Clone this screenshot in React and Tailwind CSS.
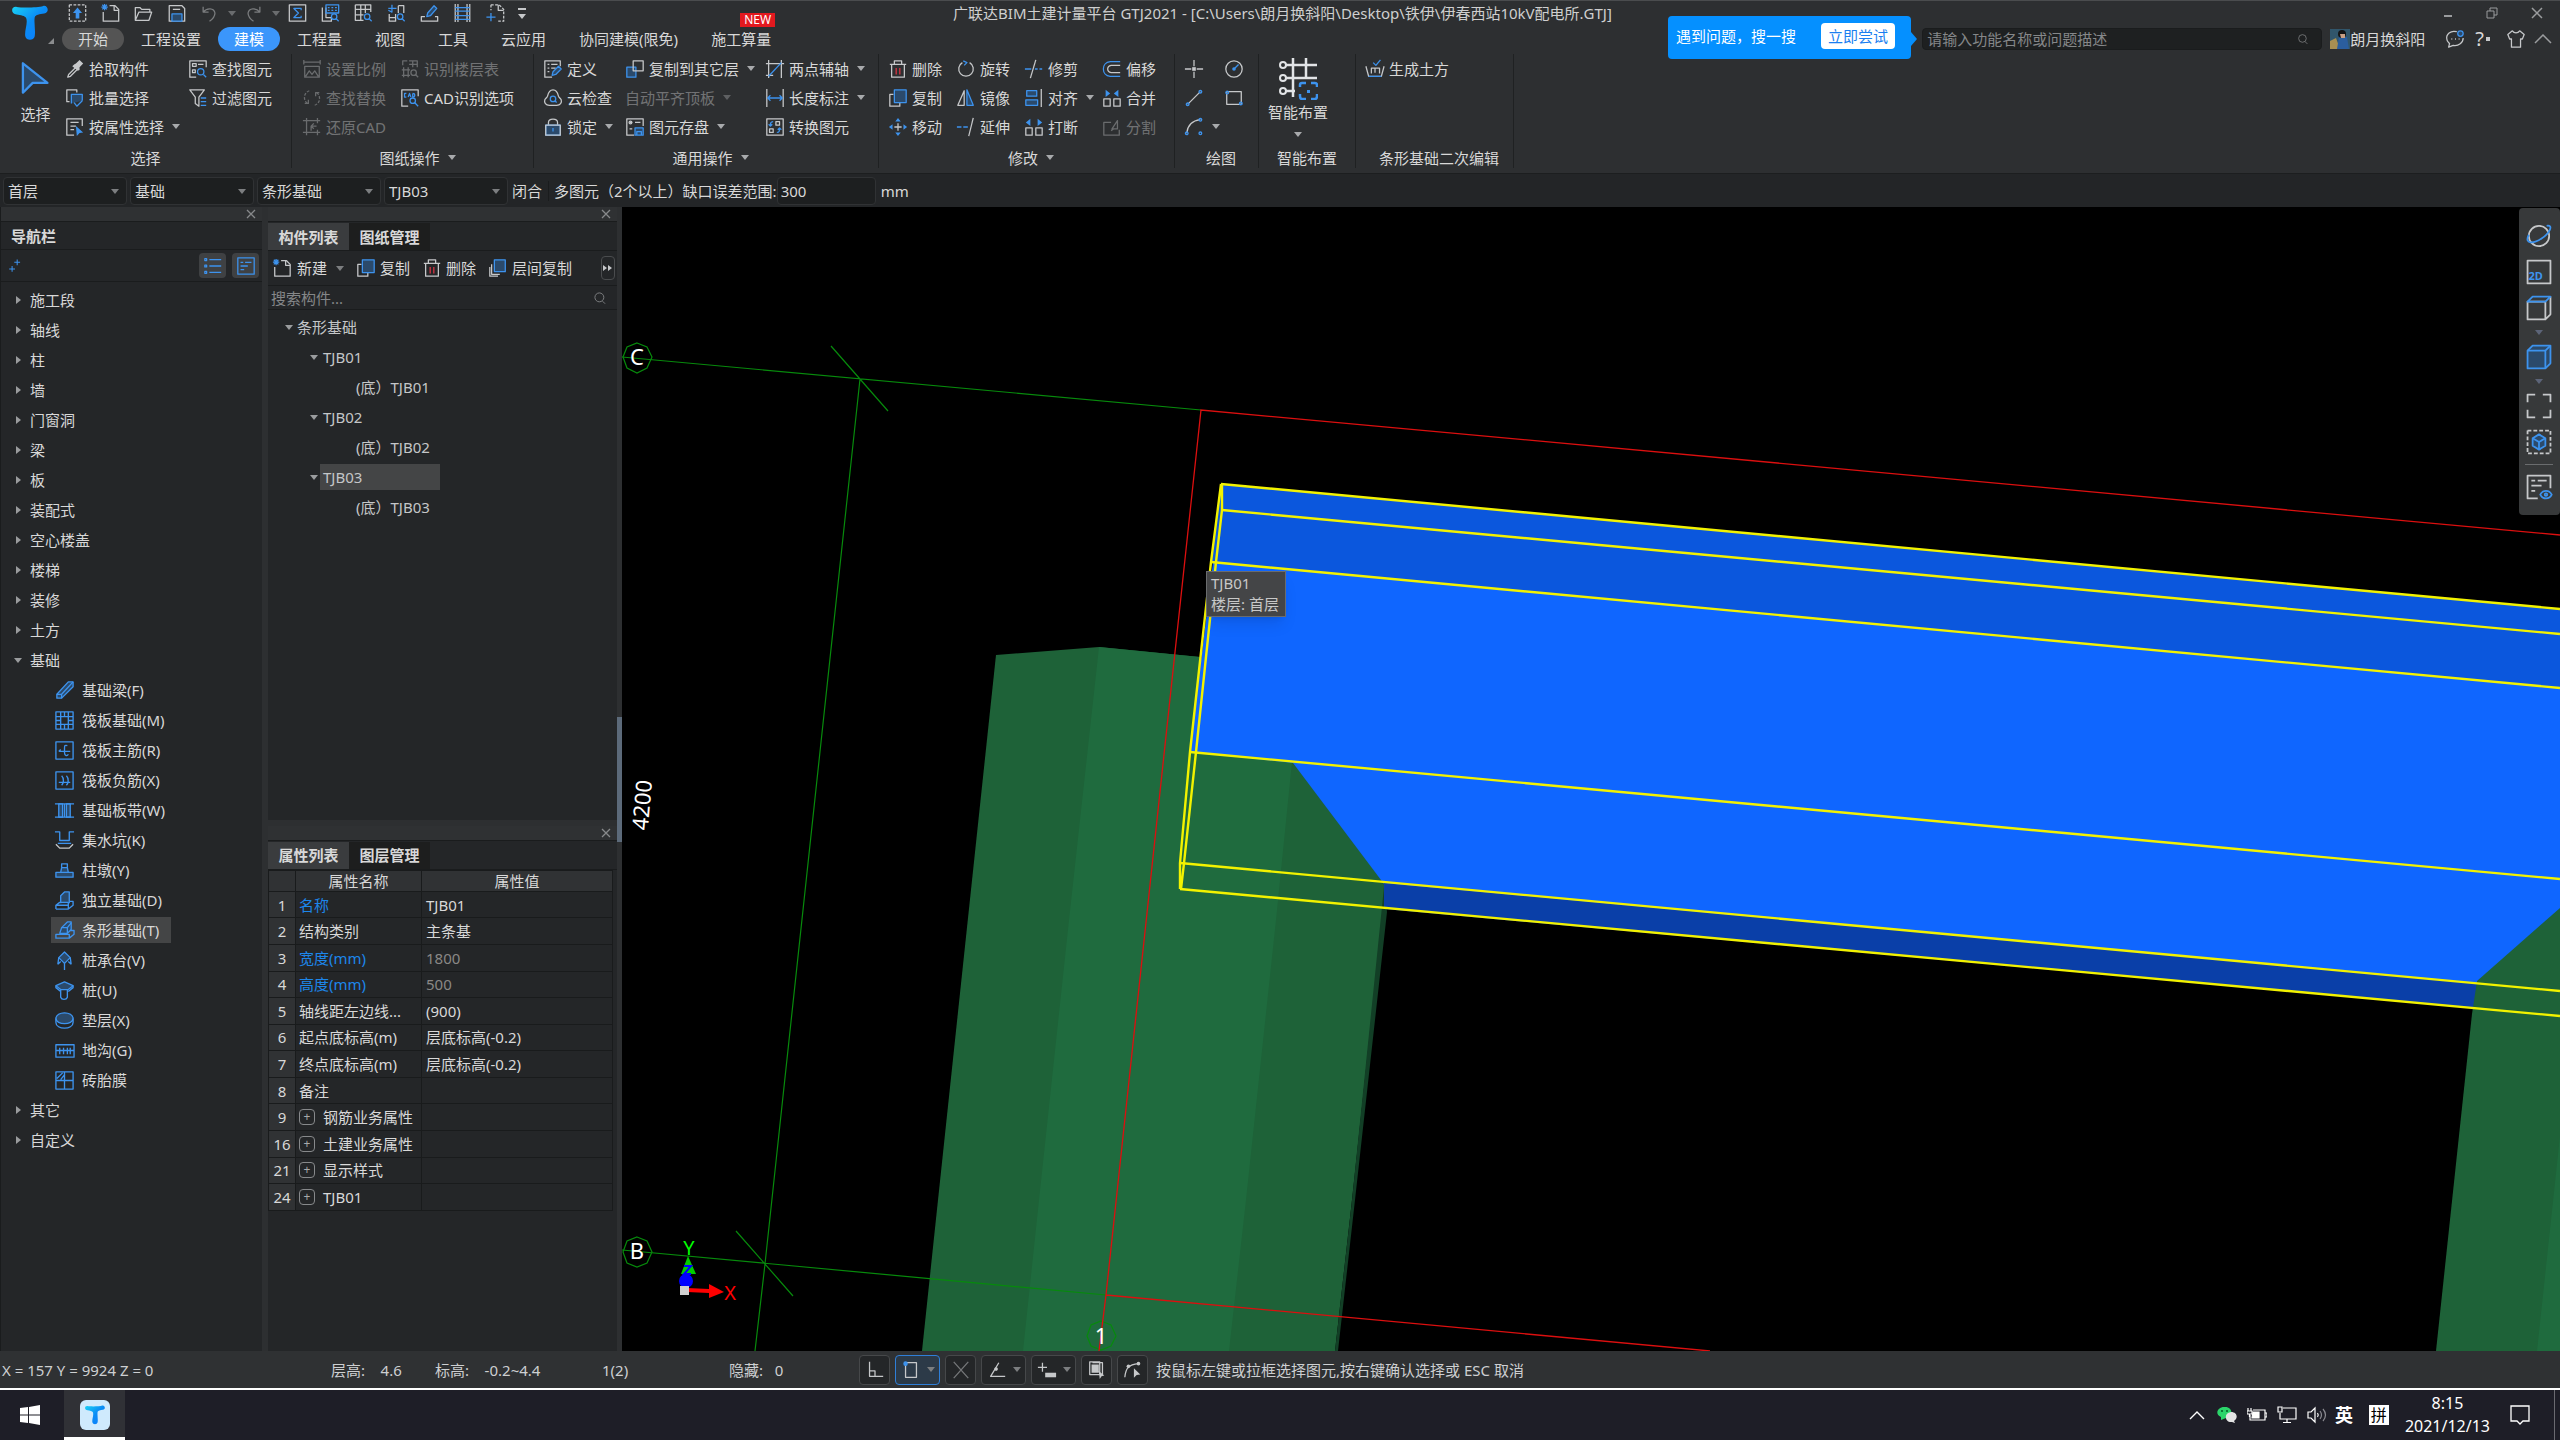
import React from 'react';
import clsx from 'clsx';

// circle as a path, so that every icon is a plain list of strokes
const c = (x, y, r) => `M${x - r} ${y}a${r} ${r} 0 1 0 ${2 * r} 0a${r} ${r} 0 1 0 ${-2 * r} 0`;

const strokes = {
  w: { stroke: '#c6c8ca', fill: 'none' },
  b: { stroke: '#3d93ee', fill: 'none' },
  bf: { stroke: '#3d93ee', fill: '#2b4a6b' },
  bs: { stroke: 'none', fill: '#3d93ee' },
  ws: { stroke: 'none', fill: '#c6c8ca' },
  r: { stroke: '#d93644', fill: 'none' },
  wd: { stroke: '#c6c8ca', fill: 'none', strokeDasharray: '3 1.6' },
};

const icons = {
  upload: [['wd', 'M1 1h18v18H1z'], ['bs', 'M10 4l5 6h-3v6H8v-6H5z']],
  newDoc: [['w', 'M9 2h6l4 4v13H2V9'], ['w', 'M14 2v5h5'], ['b', 'M1 1l5 5M6 1L1 6M3.5 0v7M0 3.5h7']],
  open: [['w', 'M1 18V4h5l2 2h9v3M1 18L5 9h14l-3 9z']],
  save: [['w', 'M2 2h14l3 3v14H2z'], ['bf', 'M5 11h11v8H5z'], ['w', 'M6 6h8']],
  undo: [['w', 'M3 3v6h6M3 9c4-5 12-5 13 1 0 4-3 7-6 9']],
  redo: [['w', 'M17 3v6h-6M17 9C13 4 5 4 4 10c0 4 3 7 6 9']],
  sum: [['w', 'M1 1h18v18H1z'], ['b', 'M14 7V5H6l5 5-5 5h8v-2']],
  calcFind: [['w', 'M1 4v15h10v-4H5V4'], ['b', 'M5 1h14v9H5zM7 4h2M11 4h2M15 4h2M7 7h2M11 7h2M15 7h2'], ['b', c(14, 14, 3)], ['b', 'M16 16l3 3']],
  gridFind: [['w', 'M1 1h17v8M1 1v17h9M1 6h17M1 12h9M7 1v17M12 1v9'], ['b', c(14, 14, 3)], ['b', 'M16 16l3 3']],
  barFind: [['b', 'M1 5h9M5 1v8l-4-2'], ['w', 'M12 2h6v8M12 2v8M2 11v8h7v-8M2 15h7'], ['b', c(14, 14, 3)], ['b', 'M16 16l3 3']],
  penTray: [['w', 'M5 14H1v5h18v-5h-3'], ['bf', 'M7 14l1-4 7-8 3 3-7 8z']],
  frame: [['w', 'M2 0v20M5 0v20M15 0v20M18 0v20'], ['b', 'M2 4h16M2 8h16M2 13h16M2 17h16']],
  select4: [['wd', 'M5 1h9l5 5v13h-6M5 1v6'], ['w', 'M13 1v6h6'], ['b', 'M5 10v9M0 14.5h10']],
  arrow: [['bf', 'M2 1v18l6-6h9z']],
  dropper: [['w', 'M11 8L3 16l-1 3 3-1 8-8'], ['ws', 'M9 5l2-1 4-4 4 4-4 4 0 3-2 1-6-5z']],
  batch: [['w', 'M4 14H1V1h11v3'], ['bf', 'M6 16V6h12v7'], ['b', 'M9 15l3 4 6-6']],
  byProp: [['w', 'M9 19H1V1h17v8M5 5h9M5 9h6M5 13h4'], ['bs', 'M11 9l8 7-4 .5-3 3.5z']],
  findEl: [['w', 'M8 19H1V1h18v7M4 4h4v3H4zM4 11h3v3H4zM10 5h6'], ['b', c(13, 13, 3.5)], ['b', 'M16 16l3 3']],
  filter: [['w', 'M1 1h16l-6 8v10l-4-3V9z'], ['b', 'M13 10h6M13 14h6M13 18h6']],
  scale: [['w', 'M1 0v5M19 0v5M1 2.5h18M2 7h16v12H2zM3 18l4-6 3 4 3-4 4 6']],
  floorTable: [['w', 'M2 6V1h5M9 1h9v7M13 1v7M9 5h9M1 11h9M1 17h9M3 8v11M8 8v11'], ['w', c(14, 14, 3)], ['w', 'M16 16l3 3']],
  replace: [['wd', 'M7 2a8 8 0 0 0-2 14M13 18a8 8 0 0 0 2-14'], ['w', 'M2 16h4v-4M18 4h-4v4']],
  cad: [['w', 'M8 19H1V1h18v7'], ['b', 'M6 5H4v4h2M8 9l1.500-4L11 9M13 5v4c3 0 3-4 0-4'], ['b', c(13, 13, 3)], ['b', 'M15 15l4 4']],
  restore: [['w', 'M0 3h19M0 16h19M4 0v19M16 0v6M16 13v6M15 9H9v5M12 6L9 9l3 3']],
  define: [['w', 'M9 19H1V1h17v6M4 5h2M8 5h7M4 9h2M8 9h5M4 13h2'], ['bf', 'M9 17l1-4 6-6 3 3-6 6z']],
  cloud: [['w', 'M6 18C2 18 0 15 1 12c1-2 2-2 3-4C5 3 8 1 10 1s5 2 6 7c1 2 2 2 3 4 1 3-1 6-5 6z'], ['b', c(10, 11, 3)], ['b', 'M12 13l2 2']],
  lock: [['w', 'M5 8V5c0-5 10-5 10 0v3'], ['bf', 'M2 8h16v11H2z'], ['w', 'M2 8h16v11H2z'], ['b', 'M10 11v4']],
  copyFloor: [['bf', 'M1 8h10v11H1z'], ['w', 'M8 1h11v11H8z']],
  store: [['w', 'M9 19H1V1h18v8M4 5h3M4 12h3M10 5h6'], ['w', c(5, 5, 1.5)], ['bf', 'M10 11h9v8h-9zM12 19v-4h5v4']],
  axis: [['w', 'M3 0v20M17 0v20M0 4h20M0 17h8'], ['b', 'M3 18L17 3']],
  length: [['w', 'M1 0v20M19 0v20'], ['b', 'M2 10h16M5 7l-3 3 3 3M15 7l3 3-3 3']],
  convert: [['w', 'M1 1h18v18H1zM11 4h4v4h-4zM4 12h4v4H4z'], ['b', 'M8 4c-3 0-3 2-3 5M3 7l2 2 2-2M12 16c3 0 3-2 3-5M13 13l2-2 2 2']],
  trash: [['w', 'M1 5h18M6 5V1h8v4M3 5v14h14V5'], ['r', 'M8 9v7M12 9v7']],
  rotate: [['w', 'M6 3a8 8 0 1 0 8 0'], ['b', 'M7 1l4 2-3 3']],
  trim: [['w', 'M12 0L6 20'], ['b', 'M0 10h7M11 10h3M16 10h3']],
  offset: [['b', 'M19 2H8C-2 3-2 17 8 18h11'], ['w', 'M19 6H9c-5 1-5 7 0 8h10']],
  copy: [['w', 'M5 6H1v13h11v-4'], ['bf', 'M6 1h13v14H6z']],
  mirror: [['w', 'M8 2v16H1z'], ['bf', 'M11 1v17h7z']],
  align: [['bf', 'M2 2h11v6H2zM1 12h13v6H1z'], ['w', 'M18 0v20']],
  merge: [['w', 'M1 11h7v8H1zM12 11h7v8h-7z'], ['bs', 'M3 1l5 4-5 4zM17 1l-5 4 5 4z']],
  move: [['w', 'M10 6v8M6 10h8'], ['bs', 'M10 0l3 4H7zM10 20l3-4H7zM0 10l4-3v6zM20 10l-4-3v6z']],
  extend: [['b', 'M0 10h5M7 10h5'], ['w', 'M18 0l-5 20']],
  breakUp: [['w', 'M1 11h7v8H1zM12 11h7v8h-7z'], ['bs', 'M6 1L1 5l5 4zM14 1l5 4-5 4z']],
  split: [['w', 'M9 5H1v14h17v-6M10 12l6-9v9zM9 14l3-2']],
  point: [['w', 'M0 10h7M13 10h7M10 0v7M10 13v7'], ['ws', 'M8 8h4v4H8z']],
  circle: [['w', c(10, 10, 9)], ['b', 'M10 10l5-5'], ['bs', c(10, 10, 2)]],
  line: [['w', 'M3 17L17 3'], ['b', c(3, 17, 1.5)], ['b', c(17, 3, 1.5)]],
  rect: [['w', 'M2 3h16v14H2z'], ['b', c(2.5, 4, 1.5)], ['b', c(17.5, 16, 1.5)]],
  arc: [['w', 'M2 17C3 8 8 3 17 2'], ['b', c(2, 17, 1.5)], ['b', c(17, 2, 1.5)], ['b', c(17, 17, 1.5)]],
  earth: [['w', 'M0 7l3 11h14l3-11M6 15V9h9v6M10 9v5'], ['b', 'M8 3l3 3 5-6M3 18h14']],
  layerCopy: [['w', 'M3 6v11h9M1 9v10h9'], ['bf', 'M6 1h12v13H6z']],
  sparkle: [['b', 'M13 1v8M9 5h8M6 10v8M2 14h8']],
  list: [['b', 'M6 3h13M6 10h13M6 17h13M1 2h2v2H1zM1 9h2v2H1zM1 16h2v2H1z']],
  note: [['b', 'M1 1h18v18H1zM4 6h3M9 6h7M4 10h8M4 14h4']],
  search: [['w', c(9, 9, 7)], ['w', 'M14 15l4 4']],
  // foundation types
  beam: [['bf', 'M2 14L14 1h5v5L7 18H2z'], ['b', 'M2 14h5v4M7 14L19 1']],
  raft: [['b', 'M1 1h18v18H1zM1 6h18M1 14h18M6 1v18M14 1v18M10 1v5M10 14v5M1 10h5M14 10h5']],
  raftMain: [['b', 'M1 1h18v18H1zM4 11h12M13 5c-3-1-3 0-3 3v4c0 4 3 4 4 2M4 11l2-2']],
  raftNeg: [['b', 'M1 1h18v18H1zM4 12h12M7 5c3 3 2 8 0 10M12 5c3 3 2 8 0 10']],
  strip: [['bf', 'M4 3h4v14H4zM12 3h4v14h-4z'], ['b', 'M0 3h20M0 17h20M10 3v14']],
  pit: [['b', 'M0 1h5v9h10V1h5'], ['w', 'M1 14l4 4h10l4-4'], ['b', 'M3 13h14']],
  pier: [['bf', 'M1 12h18v5H1zM6 12l1-5h6l1 5z'], ['b', 'M7 7V3h6v4']],
  isolated: [['bf', 'M6 13V5l4-4h5v12'], ['b', 'M1 19v-4l4-3h9v3H1M1 19h13l5-4v-4h-4M14 15v4']],
  stripBase: [['bf', 'M5 13l2-6 6-6h4v8l-4 4z'], ['b', 'M1 18v-4h14v4zM15 18l5-4v-4h-4M7 7h6l4-5M13 7v6']],
  cap: [['bf', 'M10 1l6 6-6 6-6-6z'], ['b', 'M4 7l-1 7M16 7l1 7M3 14l3-3M17 14l-3-3M10 13v7']],
  pile: [['bf', 'M1 5l9-4 9 4-5 4H6z'], ['b', 'M1 5v2l5 4M19 5v2l-5 4M6 9v8c1 3 6 3 7 0V9']],
  cushion: [['bf', 'M1 8c0-8 18-8 18 0 0 7-18 7-18 0z'], ['b', 'M1 8v4c0 8 18 8 18 0V8']],
  trench: [['b', 'M1 4h19v13H1zM1 10h19M5 7v7M9 7v7M13 7v7M16 7v7']],
  brick: [['b', 'M1 1h18v18H1zM10 1v18M1 10h18M2 8l6-6M6 9l4-5']],
  // view toolbar
  orbit: [['w', c(10, 10, 8)], ['b', 'M2 9c-4 8 4 7 10 3S22 1 16 2']],
  box2d: [['w', 'M1 1h18v18H1z']],
  cube: [['w', 'M1 5h14v14H1zM15 19l4-4V1'], ['b', 'M1 5l4-4h14l-4 4z']],
  cubeSolid: [['bf', 'M1 5l4-4h14v14l-4 4H1z'], ['b', 'M1 5h14v14M15 5l4-4']],
  fit: [['w', 'M1 7V1h6M13 1h6v6M19 13v6h-6M7 19H1v-6']],
  region: [['wd', 'M1 1h18v18H1z'], ['bf', 'M10 4l5 3v6l-5 3-5-3V7z'], ['b', 'M5 7l5 3 5-3M10 10v6']],
  display: [['w', 'M9 19H1V1h18v10M4 5h3M9 5h7M4 9h8M4 13h3'], ['b', 'M11 16c2-4 7-4 9 0-2 4-7 4-9 0z'], ['b', c(15.5, 16, 1)]],
  // status bar
  ortho: [['w', 'M4 1v16h15M4 11h6v6']],
  boxSel: [['w', 'M4 2h12v16H4z'], ['bs', c(4, 3, 2.5)]],
  cross: [['w', 'M2 1l16 18M18 1L2 19']],
  angle: [['w', 'M12 2L3 17h16'], ['ws', c(9, 9, 2)]],
  plusBox: [['w', 'M5 2v10M0 7h10'], ['ws', 'M8 13h12v5H8z']],
  layers: [['w', 'M5 2h11v14M4 1h9v14H2V1z'], ['ws', 'M4 4h8v9H4zM12 11l6 5-3 1-2 3z']],
  polySel: [['w', 'M1 18C2 8 5 4 16 3'], ['ws', c(5, 6, 2)], ['ws', c(16, 3, 2)], ['ws', 'M11 8l7 7-4 .5-3 3z']],
  shirt: [['w', 'M6 1L1 5l2 5h2v9h10v-9h2l2-5-5-4c-2 3-6 3-8 0z']],
  chat: [['w', 'M12 2C5 0 0 5 1 10c0 3 2 4 3 5l-1 4 5-2c6 1 11-3 11-8M6 10h1M10 10h1M14 10h1'], ['bf', c(16, 4, 3)]],
};

const Icon = ({ name, className = 'size-5' }) => (
  <svg viewBox="-1 -1 22 22" className={clsx('shrink-0', className)} strokeWidth="1.4" strokeLinejoin="round" aria-hidden="true">
    {icons[name].map(([kind, d], i) => (
      <path key={i} d={d} {...strokes[kind]} />
    ))}
  </svg>
);

const Caret = ({ className = 'text-[#a8aaac]' }) => (
  <svg viewBox="0 0 8 5" className={clsx('h-[5px] w-2 shrink-0', className)} aria-hidden="true">
    <path d="M0 0h8L4 5z" fill="currentColor" />
  </svg>
);

const Logo = ({ className }) => (
  <svg viewBox="0 0 38 36" className={className} aria-hidden="true">
    <defs>
      <linearGradient id="logo" x1="0" y1="0" x2="1" y2="1">
        <stop offset="0" stopColor="#19d3f5" />
        <stop offset="0.5" stopColor="#0b8cf5" />
        <stop offset="1" stopColor="#0a7cff" />
      </linearGradient>
    </defs>
    <path d="M5 1c5 1 22 1 28-1 5-1 7 7 1 8-5 1-9 1-10 4-1 6 1 13 0 20-1 5-9 5-10 0-1-6 3-14 1-19-1-3-6-3-10-4C-2 8-1 0 5 1z" fill="url(#logo)" />
  </svg>
);

const Tool = ({ icon, label, caret, dim }) => (
  <button type="button" className={clsx('flex h-[29px] items-center gap-1 whitespace-nowrap', dim && 'text-[#d8d8d8] opacity-40')}>
    {icon && <Icon name={icon} />}
    {label && <span>{label}</span>}
    {caret && <span className="pl-1"><Caret /></span>}
  </button>
);

const Group = ({ label, caret, className, children }) => (
  <section className={clsx('flex h-[114px] shrink-0 flex-col border-r border-[#1f2122]', className)}>
    <div className="flex h-[87px]">{children}</div>
    <h2 className="flex flex-1 items-end justify-center gap-2">
      <span className="leading-5">{label}</span>
      {caret && <span className="pb-2"><Caret /></span>}
    </h2>
  </section>
);

const Column = ({ className, tools }) => (
  <div className={clsx('flex shrink-0 flex-col items-start', className)}>
    {tools.map((t, i) => <Tool key={i} {...t} />)}
  </div>
);

const quickIcons = ['upload', 'newDoc', 'open', 'save', 'undo', 'redo', 'sum', 'calcFind', 'gridFind', 'barFind', 'penTray', 'frame', 'select4'];

const tabs = ['开始', '工程设置', '建模', '工程量', '视图', '工具', '云应用', '协同建模(限免)', '施工算量'];

const Header = () => (
  <header className="relative flex h-[54px] shrink-0 border-t border-[#4a4c4e]">
    <button type="button" aria-label="主菜单" className="flex w-[62px] shrink-0 items-start pl-3 pt-1">
      <Logo className="h-9 w-9" />
      <svg viewBox="0 0 6 6" className="mt-[33px] size-1.5"><path d="M6 0v6H0z" fill="#8a8c8e" /></svg>
    </button>
    <div className="flex min-w-0 flex-1 flex-col">
      <div className="flex h-6 items-center">
        <div className="flex flex-1 items-center gap-3 pl-[5px]">
          {quickIcons.map((name) => (
            <button key={name} type="button" aria-label={name} className={clsx('flex items-center gap-2', (name === 'undo' || name === 'redo') && 'w-8 opacity-50')}>
              <Icon name={name} className="h-5 w-[21px]" />
              {(name === 'undo' || name === 'redo') && <Caret />}
            </button>
          ))}
          <button type="button" aria-label="自定义快速访问栏" className="flex flex-col items-center gap-1">
            <span className="h-0.5 w-2 bg-[#c6c8ca]" />
            <Caret className="text-[#c6c8ca]" />
          </button>
        </div>
        <h1 className="whitespace-nowrap text-[#cfcfcf]">广联达BIM土建计量平台 GTJ2021 - [C:\Users\朗月换斜阳\Desktop\铁伊\伊春西站10kV配电所.GTJ]</h1>
        <div className="flex flex-1 items-center justify-end gap-8 text-[#9a9c9e]">
          <button type="button" aria-label="最小化"><svg viewBox="0 0 12 12" className="size-3"><path d="M2 9h8" stroke="currentColor" strokeWidth="2" /></svg></button>
          <button type="button" aria-label="还原"><svg viewBox="0 0 12 12" className="size-3"><path d="M1 4h7v7H1zM4 4V1h7v7H8" fill="none" stroke="currentColor" /></svg></button>
        </div>
        <button type="button" aria-label="关闭" className="flex w-[62px] justify-center pl-4 text-[#9a9c9e]">
          <svg viewBox="0 0 12 12" className="size-3"><path d="M1 1l10 10M11 1L1 11" stroke="currentColor" strokeWidth="1.5" /></svg>
        </button>
      </div>
      <div className="flex h-7 items-center">
        <nav className="flex items-center gap-px">
          {tabs.map((tab, i) => (
            <a key={tab} href="#" className={clsx('relative flex items-center whitespace-nowrap rounded-full px-4', i === 0 && 'h-[22px] bg-[#545454]', i === 2 && 'h-6 bg-[#3b96fb] text-white')}>
              {tab}
              {i === 8 && <span className="absolute -top-4 right-3 bg-[#e2191f] px-1 text-xs leading-[14px] text-white">NEW</span>}
            </a>
          ))}
        </nav>
        <div className="ml-auto flex items-center pr-2">
          <label className="flex h-[22px] w-[400px] items-center rounded-sm border border-[#1a1c1d] bg-[#1e2021] px-1">
            <input aria-label="功能搜索" placeholder="请输入功能名称或问题描述" className="min-w-0 flex-1 bg-transparent outline-none placeholder:text-[#858789]" />
            <Icon name="search" className="mr-2 size-3 opacity-60" />
          </label>
          <button type="button" className="ml-2 flex items-center whitespace-nowrap">
            <svg viewBox="0 0 20 20" className="size-5" aria-hidden="true">
              <path d="M0 0h20v20H0z" fill="#31566b" />
              <path d="M0 12l6-3 4 11H0z" fill="#a88f52" />
              <path d="M9 8h8l2 12H7z" fill="#2b5e9e" />
              <path d={c(12, 5, 4)} fill="#141414" />
              <path d="M10 5h5v4h-4z" fill="#c99f84" />
            </svg>
            朗月换斜阳
          </button>
          <button type="button" aria-label="消息" className="ml-5"><Icon name="chat" /></button>
          <button type="button" aria-label="帮助" className="ml-2.5 flex items-center text-xl leading-5">?<span className="ml-0.5 size-1 bg-[#c6c8ca]" /></button>
          <button type="button" aria-label="皮肤" className="ml-4"><Icon name="shirt" /></button>
          <button type="button" aria-label="收起" className="ml-2"><svg viewBox="0 0 18 10" className="h-2.5 w-[18px]"><path d="M1 9l8-8 8 8" fill="none" stroke="#9a9c9e" strokeWidth="1.5" /></svg></button>
        </div>
      </div>
    </div>
    {/* search hint bubble */}
    <div className="absolute right-[649px] top-[15px] flex h-[43px] w-[243px] items-center justify-between whitespace-nowrap rounded-sm bg-[#0590ff] pl-2 pr-4 pb-1 text-white">
      遇到问题，搜一搜
      <button type="button" className="h-[26px] rounded-sm bg-white px-[7px] text-[#1b7ff0]">立即尝试</button>
      <svg viewBox="0 0 6 14" className="absolute -right-1.5 top-4 h-3.5 w-1.5"><path d="M0 0l6 7-6 7z" fill="#0590ff" /></svg>
    </div>
  </header>
);

const Ribbon = () => (
  <div className="flex h-[120px] shrink-0 border-b border-[#1c1e1f]">
    <Group label="选择" className="w-[292px]">
      <button type="button" className="flex w-[65px] flex-col items-center gap-2 pl-1.5 pt-1.5">
        <Icon name="arrow" className="size-9" />
        <span className="leading-5">选择</span>
      </button>
      <Column className="w-[123px]" tools={[{ icon: 'dropper', label: '拾取构件' }, { icon: 'batch', label: '批量选择' }, { icon: 'byProp', label: '按属性选择', caret: true }]} />
      <Column tools={[{ icon: 'findEl', label: '查找图元' }, { icon: 'filter', label: '过滤图元' }]} />
    </Group>
    <Group label="图纸操作" caret className="w-[242px] pl-2.5">
      <Column className="w-[98px]" tools={[{ icon: 'scale', label: '设置比例', dim: true }, { icon: 'replace', label: '查找替换', dim: true }, { icon: 'restore', label: '还原CAD', dim: true }]} />
      <Column tools={[{ icon: 'floorTable', label: '识别楼层表', dim: true }, { icon: 'cad', label: 'CAD识别选项' }]} />
    </Group>
    <Group label="通用操作" caret className="w-[345px] pl-[9px]">
      <Column className="w-[82px]" tools={[{ icon: 'define', label: '定义' }, { icon: 'cloud', label: '云检查' }, { icon: 'lock', label: '锁定', caret: true }]} />
      <Column className="w-[140px]" tools={[{ icon: 'copyFloor', label: '复制到其它层', caret: true }, { label: '自动平齐顶板', caret: true, dim: true }, { icon: 'store', label: '图元存盘', caret: true }]} />
      <Column tools={[{ icon: 'axis', label: '两点辅轴', caret: true }, { icon: 'length', label: '长度标注', caret: true }, { icon: 'convert', label: '转换图元' }]} />
    </Group>
    <Group label="修改" caret className="w-[296px] pl-[9px]">
      <Column className="w-[68px]" tools={[{ icon: 'trash', label: '删除' }, { icon: 'copy', label: '复制' }, { icon: 'move', label: '移动' }]} />
      <Column className="w-[68px]" tools={[{ icon: 'rotate', label: '旋转' }, { icon: 'mirror', label: '镜像' }, { icon: 'extend', label: '延伸' }]} />
      <Column className="w-[78px]" tools={[{ icon: 'trim', label: '修剪' }, { icon: 'align', label: '对齐', caret: true }, { icon: 'breakUp', label: '打断' }]} />
      <Column tools={[{ icon: 'offset', label: '偏移' }, { icon: 'merge', label: '合并' }, { icon: 'split', label: '分割', dim: true }]} />
    </Group>
    <Group label="绘图" className="w-[84px] pl-[9px]">
      <Column className="w-10" tools={[{ icon: 'point' }, { icon: 'line' }, { icon: 'arc', caret: true }]} />
      <Column tools={[{ icon: 'circle' }, { icon: 'rect' }]} />
    </Group>
    <Group label="智能布置" className="w-[97px]">
      <button type="button" className="flex w-[78px] flex-col items-center pt-1">
        <svg viewBox="0 0 40 42" className="h-[42px] w-10" fill="none" strokeWidth="2.5" aria-hidden="true">
          <path d="M8 7h31M8 20h31M8 33h9M15 0v39M28 0v19" stroke="#e2e4e6" />
          <path d={c(5, 7, 3) + c(5, 20, 3) + c(5, 33, 3)} stroke="#e2e4e6" strokeWidth="2" />
          <path d="M22 29v-2q0-2 2-2h4M33 25h4q2 0 2 2v2M39 36v2q0 3-2 3h-4M28 41h-4q-2 0-2-3v-2" stroke="#3d93ee" />
          <path d="M29 32h3v3h-3z" fill="#3d93ee" />
        </svg>
        <span className="mb-2.5 whitespace-nowrap pt-0.5 leading-5">智能布置</span>
        <Caret />
      </button>
    </Group>
    <Group label="条形基础二次编辑" className="w-[158px] pl-[9px]">
      <Column tools={[{ icon: 'earth', label: '生成土方' }]} />
    </Group>
  </div>
);

const OptionBar = () => (
  <div className="flex h-[33px] shrink-0 items-center gap-[3px] whitespace-nowrap bg-[#232527] pl-[3px]">
    {[['楼层', '首层'], ['类别', '基础'], ['构件类型', '条形基础'], ['构件', 'TJB03']].map(([name, value]) => (
      <div key={name} className="relative w-[124px]">
        <select aria-label={name} className="h-7 w-full appearance-none rounded border border-[#303234] bg-[#1d1f20] pl-1">
          <option>{value}</option>
        </select>
        <span className="pointer-events-none absolute right-2 top-3 flex"><Caret className="text-[#7c7e80]" /></span>
      </div>
    ))}
    <button type="button" className="px-px">闭合</button>
    <span className="ml-0.5 h-5 w-px bg-[#1a1c1d]" />
    <div className="flex items-center">
      <label htmlFor="gap" className="pl-0.5">多图元（2个以上）缺口误差范围:</label>
      <input id="gap" defaultValue="300" className="h-7 w-[99px] rounded border border-[#303234] bg-[#1d1f20] px-[3px] outline-none" />
    </div>
    <span className="pl-0.5">mm</span>
  </div>
);

const PanelTop = () => (
  <div className="flex h-[15px] shrink-0 items-center justify-end border-b border-[#1a1c1d] bg-[#2f3133] pr-1.5">
    <button type="button" aria-label="关闭面板">
      <svg viewBox="0 0 10 10" className="size-2.5"><path d="M1 1l8 8M9 1L1 9" stroke="#87898b" strokeWidth="1.3" /></svg>
    </button>
  </div>
);

const PanelTabs = ({ labels }) => (
  <div className="flex h-[29px] shrink-0 items-end border-b border-[#1a1c1d] font-bold">
    {labels.map((label, i) => (
      <button key={label} type="button" className={clsx('h-[27px] w-[81px]', i === 0 ? 'bg-[#3a3c3e]' : 'bg-[#1d1e1e]')}>{label}</button>
    ))}
  </div>
);

const Triangle = ({ open }) => (
  <svg viewBox="0 0 8 8" className="size-2 shrink-0" aria-hidden="true">
    <path d={open ? 'M0 2h8L4 7z' : 'M2 0l5 4-5 4z'} fill="#9a9c9e" />
  </svg>
);

const categories = ['施工段', '轴线', '柱', '墙', '门窗洞', '梁', '板', '装配式', '空心楼盖', '楼梯', '装修', '土方', '基础', '其它', '自定义'];

const foundations = [
  ['beam', '基础梁(F)'],
  ['raft', '筏板基础(M)'],
  ['raftMain', '筏板主筋(R)'],
  ['raftNeg', '筏板负筋(X)'],
  ['strip', '基础板带(W)'],
  ['pit', '集水坑(K)'],
  ['pier', '柱墩(Y)'],
  ['isolated', '独立基础(D)'],
  ['stripBase', '条形基础(T)'],
  ['cap', '桩承台(V)'],
  ['pile', '桩(U)'],
  ['cushion', '垫层(X)'],
  ['trench', '地沟(G)'],
  ['brick', '砖胎膜'],
];

const Navigator = () => (
  <aside className="flex w-[262px] shrink-0 flex-col border-l border-[#1a1c1d] bg-[#242628]">
    <PanelTop />
    <h2 className="flex h-7 shrink-0 items-center border-b border-[#1a1c1d] pl-2.5 font-bold">导航栏</h2>
    <div className="flex h-8 shrink-0 items-center gap-1.5 border-b border-[#1a1c1d] pl-1.5 pr-[3px]">
      <Icon name="sparkle" className="size-4" />
      <button type="button" aria-label="列表" className="ml-auto grid h-[25px] w-[27px] place-items-center rounded bg-[#3f4143]"><Icon name="list" /></button>
      <button type="button" aria-label="说明" className="grid h-[25px] w-[27px] place-items-center rounded bg-[#3f4143]"><Icon name="note" /></button>
    </div>
    <ul className="pt-[3px]">
      {categories.map((name) => (
        <li key={name}>
          <button type="button" className="flex h-[30px] items-center gap-2 pl-[13px]">
            <Triangle open={name === '基础'} />
            {name}
          </button>
          {name === '基础' && (
            <ul className="pl-[50px]">
              {foundations.map(([icon, label]) => (
                <li key={icon} className="flex h-[30px] items-center">
                  <button type="button" className={clsx('flex h-[26px] items-center gap-[7px] pl-[3px] pr-3', icon === 'stripBase' && 'bg-[#444546]')}>
                    <Icon name={icon} className="size-[21px]" />
                    {label}
                  </button>
                </li>
              ))}
            </ul>
          )}
        </li>
      ))}
    </ul>
  </aside>
);

const ComponentList = () => (
  <section className="flex min-h-0 flex-7 flex-col bg-[#242628]">
    <PanelTop />
    <PanelTabs labels={['构件列表', '图纸管理']} />
    <div className="flex h-[35px] shrink-0 items-center gap-3 whitespace-nowrap border-b border-[#1a1c1d] pl-1 pr-0.5">
      <button type="button" className="flex items-center gap-[5px]"><Icon name="newDoc" />新建<span className="pl-1"><Caret className="text-[#7c7e80]" /></span></button>
      <button type="button" className="flex items-center gap-1"><Icon name="copy" />复制</button>
      <button type="button" className="flex items-center gap-1"><Icon name="trash" />删除</button>
      <button type="button" className="flex items-center gap-1"><Icon name="layerCopy" />层间复制</button>
      <button type="button" aria-label="更多" className="ml-auto grid h-6 w-3.5 shrink-0 place-items-center rounded border border-[#4a4c4e]">
        <svg viewBox="0 0 10 6" className="h-1.5 w-2.5"><path d="M0 0l4 3-4 3zM5 0l4 3-4 3z" fill="#c6c8ca" /></svg>
      </button>
    </div>
    <label className="flex h-6 shrink-0 items-center border-b border-[#1a1c1d] pl-[3px] pr-2.5">
      <input aria-label="搜索构件" placeholder="搜索构件..." className="min-w-0 flex-1 bg-transparent outline-none placeholder:text-[#858789]" />
      <Icon name="search" className="size-3.5 opacity-60" />
    </label>
    <ul className="pt-0.5 text-[#c4c6c8]">
      <li className="flex h-[30px] items-center gap-1 pl-[17px]"><Triangle open />条形基础</li>
      {['TJB01', 'TJB02', 'TJB03'].map((name) => (
        <li key={name}>
          <div className="flex h-[30px] items-center pl-[42px]">
            <Triangle open />
            <button type="button" className={clsx('ml-0.5 h-[26px] w-[120px] pl-[3px] text-left', name === 'TJB03' && 'bg-[#444546]')}>{name}</button>
          </div>
          <div className="flex h-[30px] items-center pl-[88px]">(底）{name}</div>
        </li>
      ))}
    </ul>
  </section>
);

const properties = [
  { no: 1, name: '名称', value: 'TJB01', blue: true },
  { no: 2, name: '结构类别', value: '主条基' },
  { no: 3, name: '宽度(mm)', value: '1800', blue: true, locked: true },
  { no: 4, name: '高度(mm)', value: '500', blue: true, locked: true },
  { no: 5, name: '轴线距左边线...', value: '(900)' },
  { no: 6, name: '起点底标高(m)', value: '层底标高(-0.2)' },
  { no: 7, name: '终点底标高(m)', value: '层底标高(-0.2)' },
  { no: 8, name: '备注', value: '' },
  { no: 9, name: '钢筋业务属性', group: true },
  { no: 16, name: '土建业务属性', group: true },
  { no: 21, name: '显示样式', group: true },
  { no: 24, name: 'TJB01', group: true },
];

const PropertyList = () => (
  <section className="flex min-h-0 flex-6 flex-col bg-[#242628]">
    <PanelTop />
    <PanelTabs labels={['属性列表', '图层管理']} />
    <div className="pr-1">
      <table className="h-[341px] w-full table-fixed border-collapse whitespace-nowrap">
        <thead>
          <tr className="bg-[#303234]">
            <th className="w-[27px] border border-[#191b1c]" />
            <th className="w-[126px] border border-[#191b1c] p-0 font-normal">属性名称</th>
            <th className="border border-[#191b1c] p-0 font-normal">属性值</th>
          </tr>
        </thead>
        <tbody>
          {properties.map((p) => (
            <tr key={p.no}>
              <td className="border border-[#191b1c] bg-[#303234] p-0 text-center">{p.no}</td>
              <td className={clsx('border border-[#191b1c] py-0 pl-[3px] pr-0', p.blue && 'text-[#1d86ea]')}>
                <div className="flex items-center gap-2">
                  {p.group && <button type="button" aria-label="展开" className="grid size-4 place-items-center rounded-sm border border-[#87898b] text-xs leading-3 text-[#a8aaac]">+</button>}
                  {p.name}
                </div>
              </td>
              <td className={clsx('border border-[#191b1c] py-0 pl-1 pr-0', p.locked && 'text-[#8a8886]')}>{p.value}</td>
            </tr>
          ))}
        </tbody>
      </table>
    </div>
  </section>
);

const Scene = () => (
  <svg viewBox="622 207 1938 1144" preserveAspectRatio="xMinYMin slice" className="absolute inset-0 size-full" fontFamily="'Noto Sans', sans-serif">
    {/* left footing */}
    <path d="M996 655l103-8 101 10 93 105 91 121v17l-32 300-17 151H922l16-151z" fill="#1e6238" />
    <path d="M1099 647l101 10 92 105-16 158-30 280-17 151h-206l16-151 30-280z" fill="#1f6b3e" />
    <path d="M1384 887l-32 313-17 151h3l17-151 32-288z" fill="#123f26" />

    {/* selected strip foundation */}
    <path d="M1221 484l1339 125v79L1211 562z" fill="#0b57dd" />
    <path d="M1213 562l1347 126v303L1384 884l-91-121-103-11z" fill="#0f66ff" />
    <path d="M1384 883l1176 108v25L1384 909z" fill="#0a3fa8" />

    {/* right footing */}
    <path d="M2560 908l-83 73-5 33-36 337h124z" fill="#1e6238" />
    <path d="M2560 1136l-23 215h23z" fill="#1f6b3e" />

    <g fill="none" stroke="#f2f200" strokeWidth="2.4">
      <path d="M1221 484l1339 125M1222 510l1338 124M1211 562l1349 126M1190 752l1370 127M1180 863l1380 128M1180 889l1380 127" />
      <path d="M1221 484l-10 78-21 190-10 111v26M1222 484v26l-6 52-20 190-12 111-3 26" />
    </g>

    {/* axis grid */}
    <g fill="none" stroke="#078a0c" strokeWidth="1.2">
      <path d="M622 357l579 53M622 1250l484 45M860 379l-95 885-10 87M831 346l57 65M736 1231l57 65" />
      <path d="M637 343l10 4 5 10-5 11-10 5-10-5-4-11 4-10zM637 1237l10 4 5 11-5 11-10 4-10-4-4-11 4-11zM1101 1321l10 4 5 11-5 10-10 4-10-4-4-10 4-11z" />
    </g>
    <path d="M2560 535L1201 410l-95 885-7 56M1106 1295l604 56" fill="none" stroke="#dc0f0f" strokeWidth="1.3" />
    <g fill="#fff" fontSize="22" textAnchor="middle">
      <text x="637" y="365">C</text>
      <text x="637" y="1259">B</text>
      <text x="1101" y="1344">1</text>
      <text x="642" y="805" dy="8" fontSize="22" transform="rotate(-85 642 805)">4200</text>
    </g>

    {/* view gizmo */}
    <path d="M687 1288l22 1v-5l15 8-15 6v-5l-22-1z" fill="#f00" />
    <path d="M681 1274l7-18 8 18z" fill="#0c0" />
    <path d="M684 1266h7l-7 8h7" fill="none" stroke="#00f" strokeWidth="2" />
    <ellipse cx="686" cy="1281" rx="7" ry="7" fill="#00f" />
    <path d="M680 1286h9v9h-9z" fill="#d0d0d0" />
    <text x="689" y="1255" fontSize="20" fill="#0f0" textAnchor="middle">Y</text>
    <text x="730" y="1300" fontSize="20" fill="#f00" textAnchor="middle">X</text>
  </svg>
);

const ViewButton = ({ name, caret, children }) => (
  <button type="button" aria-label={name} className="relative flex flex-col items-center gap-2">
    <Icon name={name} className="size-7" />
    {children}
    {caret && <Caret className="text-[#5c6478]" />}
  </button>
);

const Viewport = () => (
  <main className="relative min-w-0 flex-1 overflow-hidden bg-black">
    <Scene />
    <div className="absolute left-[584px] top-[364px] whitespace-nowrap border border-[#6a6c6e] bg-[#444547] py-px pl-1 pr-1.5 leading-[21px] text-[#c8c8c8] shadow-lg">
      <p>TJB01</p>
      <p>楼层: 首层</p>
    </div>
    <div className="absolute right-0 top-px flex w-[41px] flex-col items-center gap-2 rounded bg-[#37393a] py-3.5 pr-0.5">
      <ViewButton name="orbit" />
      <ViewButton name="box2d"><span className="absolute left-1 top-3 text-[11px] font-bold leading-3 text-[#3d93ee]">2D</span></ViewButton>
      <ViewButton name="cube" caret />
      <ViewButton name="cubeSolid" caret />
      <ViewButton name="fit" />
      <ViewButton name="region" />
      <span className="h-px w-7 bg-[#6a6c6e]" />
      <ViewButton name="display" />
    </div>
  </main>
);

const snapTools = [
  { icon: 'ortho' },
  { icon: 'boxSel', caret: true, active: true },
  { icon: 'cross', dim: true },
  { icon: 'angle', caret: true },
  { icon: 'plusBox', caret: true },
  { icon: 'layers' },
  { icon: 'polySel' },
];

const StatusBar = () => (
  <footer className="flex h-[39px] shrink-0 items-center whitespace-nowrap border-b-2 border-white bg-[#2f3133] pl-0.5 text-[#cdcfd1]">
    <span className="w-[329px]">X = 157 Y = 9924 Z = 0</span>
    <span className="w-[104px]">层高:&nbsp;&nbsp;&nbsp; 4.6</span>
    <span className="w-[167px]">标高:&nbsp;&nbsp;&nbsp; -0.2~4.4</span>
    <span className="w-[127px]">1(2)</span>
    <span className="w-[130px]">隐藏:&nbsp;&nbsp; 0</span>
    <div className="flex items-center gap-[5px]">
      {snapTools.map((t) => (
        <button
          key={t.icon}
          type="button"
          aria-label={t.icon}
          className={clsx('flex h-[30px] items-center justify-center gap-1.5 rounded border', t.caret ? 'w-[45px]' : 'w-[31px]', t.active ? 'border-[#2f7fd8] bg-[#2c3a48]' : 'border-[#46484a] bg-[#242628]')}
        >
          <Icon name={t.icon} className={t.dim ? 'size-5 opacity-50' : 'size-5'} />
          {t.caret && <Caret className="text-[#7c7e80]" />}
        </button>
      ))}
    </div>
    <span className="pl-2">按鼠标左键或拉框选择图元,按右键确认选择或 ESC 取消</span>
  </footer>
);

const Taskbar = () => (
  <div className="flex h-[50px] shrink-0 items-center bg-[#1e1e27] text-white">
    <button type="button" aria-label="开始菜单" className="pl-5 pr-6">
      <svg viewBox="0 0 20 20" className="size-5"><path d="M0 3l8-1v7.500H0zM9 2l11-2v9.500H9zM0 10.500h8V18l-8-1zM9 10.500h11V20L9 18z" fill="#fff" /></svg>
    </button>
    <button type="button" aria-label="GTJ2021" className="flex h-full w-[61px] items-center justify-center border-b-[3px] border-white bg-[#303136] pt-[3px]">
      <span className="grid size-[30px] place-items-center rounded-md bg-[#cfeafd]"><Logo className="size-5" /></span>
    </button>
    <div className="ml-auto flex h-full items-center">
      <svg viewBox="0 0 16 10" className="mr-3 h-2.5 w-4"><path d="M1 9l7-7 7 7" fill="none" stroke="#fff" strokeWidth="1.4" /></svg>
      <svg viewBox="0 0 20 18" className="mr-2.5 h-[18px] w-5">
        <path d="M7 1c9-1 10 10 2 11l-5 2v-3C-3 8 1 1 7 1z" fill="#2bd46a" />
        <path d="M14 6c7 0 7 7 3 9l1 2-3-1c-7 1-9-9-1-10z" fill="#e4e4e4" />
        <path d="M4 4h2v2H4zM9 4h2v2H9z" fill="#0c7a38" />
      </svg>
      <svg viewBox="0 0 20 16" className="mr-2.5 h-4 w-5" fill="none" stroke="#fff" strokeWidth="1.2">
        <path d="M6 3h12v10H3V8M18 6h2v4h-2M1 1v3M4 1v3M0 4h5v3H0zM2.500 7v3" />
        <path d="M6 5h6v6H5z" fill="#fff" />
      </svg>
      <svg viewBox="0 0 20 18" className="mr-2.5 h-[18px] w-5" fill="none" stroke="#fff" strokeWidth="1.2">
        <path d="M6 2h13v11H3V7M1 1h4v5H1zM10 13v3M6 16.500h8" />
      </svg>
      <svg viewBox="0 0 20 18" className="mr-2 h-[18px] w-5" fill="none" stroke="#fff" strokeWidth="1.2">
        <path d="M1 6h3l4-4v14l-4-4H1zM10.500 7q1.500 2 0 4" />
        <path d="M13 5q3 4 0 8M16 3q5 6 0 12" stroke="#8a8a90" />
      </svg>
      <span className="mr-4 text-lg font-bold leading-6">英</span>
      <span className="mr-4 grid size-5 place-items-center bg-white text-base leading-5 text-black">拼</span>
      <time className="text-center text-base leading-[23px]">8:15<br />2021/12/13</time>
      <svg viewBox="0 0 20 20" className="ml-5 mr-6 size-5" fill="none" stroke="#fff" strokeWidth="1.3"><path d="M1 1h18v15h-6l-3 3-3-3H1z" /></svg>
      <span className="h-full w-1.5 border-l border-[#6a6a70]" />
    </div>
  </div>
);

const App = () => (
  <div className="flex h-screen flex-col overflow-hidden bg-[#2d2f31] font-['Noto_Sans','Noto_Sans_CJK_SC',sans-serif] text-[15px] leading-5 text-[#d8d8d8]">
    <Header />
    <Ribbon />
    <OptionBar />
    <div className="flex min-h-0 flex-1">
      <Navigator />
      <div className="ml-1.5 flex w-[349px] shrink-0 flex-col gap-1.5">
        <ComponentList />
        <PropertyList />
      </div>
      <div className="flex w-[5px] shrink-0 items-center"><span className="h-[125px] w-full bg-[#5c6a7a]" /></div>
      <Viewport />
    </div>
    <StatusBar />
    <Taskbar />
  </div>
);

export default App;
